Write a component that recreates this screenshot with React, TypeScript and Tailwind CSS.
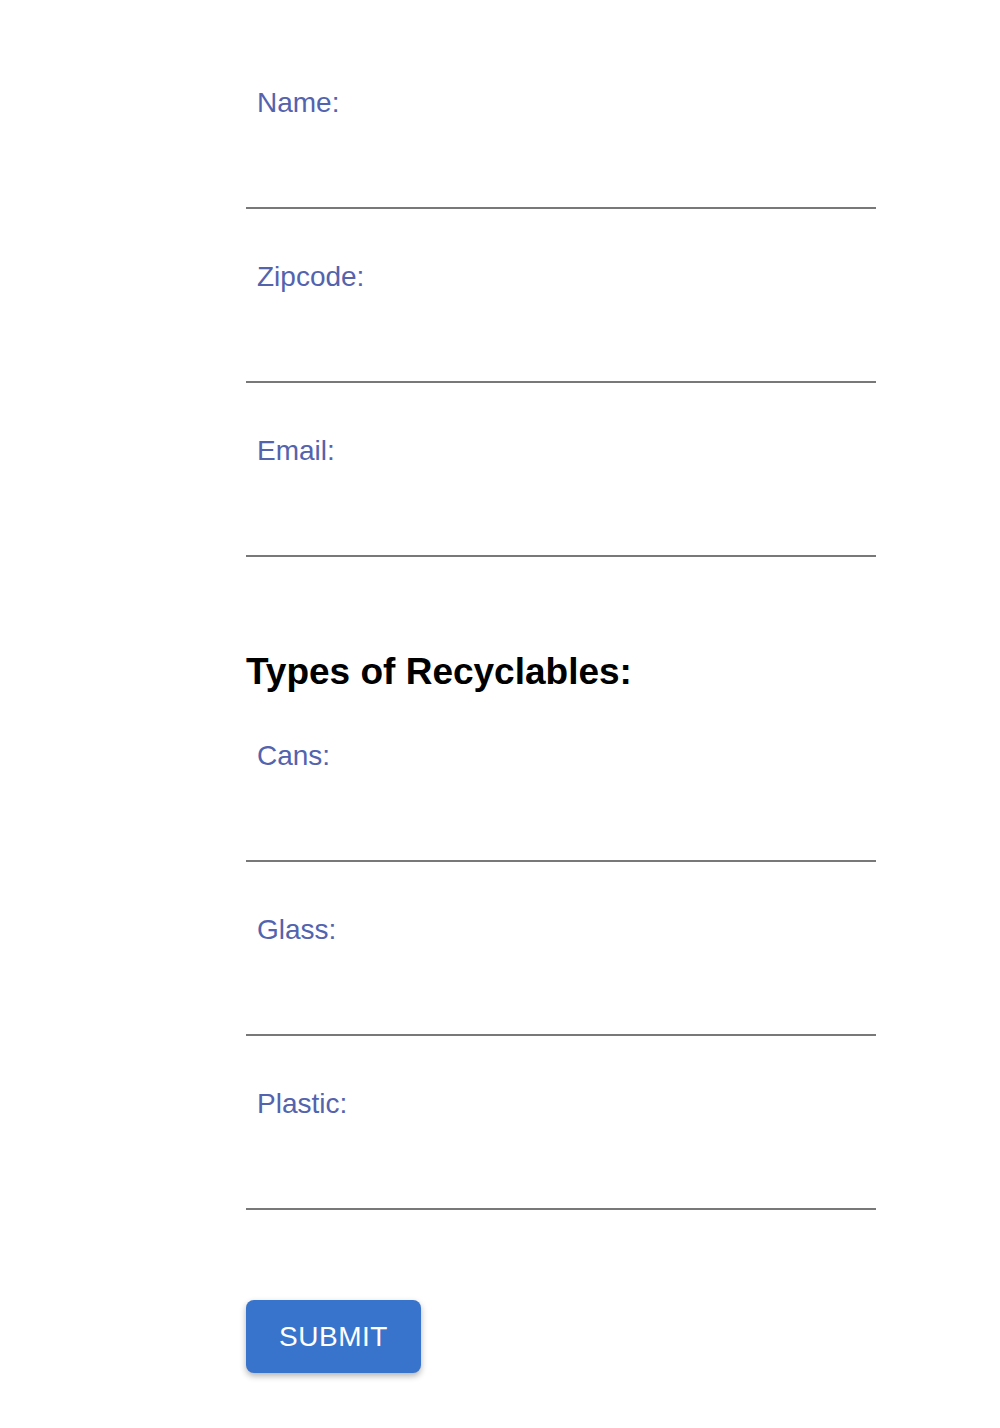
import React from 'react';

const Field: React.FC<{ label: string }> = ({ label }) => (
  <div className="h-[174px] border-b-2 border-[#787878] pl-[11px] pt-[54px]">
    <label className="block text-[28px] leading-[28px] text-[#5463ad]">{label}</label>
  </div>
);

export default function App() {
  return (
    <div className="min-h-[1428px] bg-white font-['Liberation_Sans',Arial,sans-serif]">
      <div className="ml-[246px] w-[630px] pt-[35px]">
        <Field label="Name:" />
        <Field label="Zipcode:" />
        <Field label="Email:" />
        <h2 className="mt-[99px] text-[37px] leading-[32px] font-bold text-black">Types of Recyclables:</h2>
        <Field label="Cans:" />
        <Field label="Glass:" />
        <Field label="Plastic:" />
        <button className="mt-[90px] h-[73px] w-[175px] rounded-[8px] bg-[#3874cb] text-[28px] tracking-[0.5px] text-white shadow-[0_3px_6px_rgba(0,0,0,0.3)]">
          SUBMIT
        </button>
      </div>
    </div>
  );
}
